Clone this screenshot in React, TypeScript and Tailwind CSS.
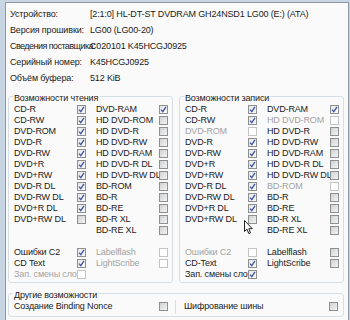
import React from "react";

type Item = { label: string; checked?: boolean; disabled?: boolean };

const readCol1: Item[] = [
  { label: "CD-R", checked: true },
  { label: "CD-RW", checked: true },
  { label: "DVD-ROM", checked: true },
  { label: "DVD-R", checked: true },
  { label: "DVD-RW", checked: true },
  { label: "DVD+R", checked: true },
  { label: "DVD+RW", checked: true },
  { label: "DVD-R DL", checked: true },
  { label: "DVD-RW DL", checked: true },
  { label: "DVD+R DL", checked: true },
  { label: "DVD+RW DL" },
];

const readCol2: Item[] = [
  { label: "DVD-RAM", checked: true },
  { label: "HD DVD-ROM" },
  { label: "HD DVD-R" },
  { label: "HD DVD-RW" },
  { label: "HD DVD-RAM" },
  { label: "HD DVD-R DL" },
  { label: "HD DVD-RW DL" },
  { label: "BD-ROM" },
  { label: "BD-R" },
  { label: "BD-RE" },
  { label: "BD-R XL" },
  { label: "BD-RE XL" },
];

const readExtra1: Item[] = [
  { label: "Ошибки C2", checked: true },
  { label: "CD Text", checked: true },
  { label: "Зап. смены слоя", disabled: true },
];
const readExtra2: Item[] = [
  { label: "Labelflash", disabled: true },
  { label: "LightScribe", disabled: true },
];

const writeCol1: Item[] = [
  { label: "CD-R", checked: true },
  { label: "CD-RW", checked: true },
  { label: "DVD-ROM", disabled: true },
  { label: "DVD-R", checked: true },
  { label: "DVD-RW", checked: true },
  { label: "DVD+R", checked: true },
  { label: "DVD+RW", checked: true },
  { label: "DVD-R DL", checked: true },
  { label: "DVD-RW DL", checked: true },
  { label: "DVD+R DL", checked: true },
  { label: "DVD+RW DL" },
];

const writeCol2: Item[] = [
  { label: "DVD-RAM", checked: true },
  { label: "HD DVD-ROM", disabled: true },
  { label: "HD DVD-R" },
  { label: "HD DVD-RW" },
  { label: "HD DVD-RAM" },
  { label: "HD DVD-R DL" },
  { label: "HD DVD-RW DL" },
  { label: "BD-ROM", disabled: true },
  { label: "BD-R" },
  { label: "BD-RE" },
  { label: "BD-R XL" },
  { label: "BD-RE XL" },
];

const writeExtra1: Item[] = [
  { label: "Ошибки C2", disabled: true },
  { label: "CD-Text", checked: true },
  { label: "Зап. смены слоя", checked: true },
];
const writeExtra2: Item[] = [{ label: "Labelflash" }, { label: "LightScribe" }];

// label, value, squeeze long label so it fits the column
const info: [string, string, boolean][] = [
  ["Устройство:", "[2:1:0] HL-DT-ST DVDRAM GH24NSD1 LG00 (E:) (ATA)", false],
  ["Версия прошивки:", "LG00 (LG00-20)", false],
  ["Сведения поставщика:", "C020101 K45HCGJ0925", true],
  ["Серийный номер:", "K45HCGJ0925", false],
  ["Объём буфера:", "512 KiB", false],
];

function Check({ checked, disabled }: { checked?: boolean; disabled?: boolean }) {
  if (disabled) {
    return <div className="w-[9px] h-[9px] shrink-0 border border-[#c4c4c4] bg-white" />;
  }
  return (
    <div
      className={
        "w-[9px] h-[9px] shrink-0 border border-[#8e8f8f] bg-gradient-to-br flex items-center justify-center " +
        (checked ? "from-[#e4e6ea] to-[#fbfbfb]" : "from-[#cfd1d4] to-[#f4f4f4]")
      }
    >
      {checked && (
        <svg width="7" height="7" viewBox="0 0 7 7">
          <path d="M1 3.6 L2.8 5.6 L6 0.8" fill="none" stroke="#3c55a0" strokeWidth="1.3" />
        </svg>
      )}
    </div>
  );
}

function Cell({ item }: { item?: Item }) {
  if (!item) return <div className="w-[72px] shrink-0" />;
  return (
    <div className="flex items-center shrink-0">
      <span
        className={
          "w-[63px] whitespace-nowrap overflow-visible " + (item.disabled ? "text-[#a3a3a3]" : "text-[#1b1b1b]")
        }
      >
        {item.label}
      </span>
      <Check checked={item.checked} disabled={item.disabled} />
    </div>
  );
}

function Rows({ col1, col2 }: { col1: Item[]; col2: Item[] }) {
  const n = Math.max(col1.length, col2.length);
  return (
    <div className="flex flex-col">
      {Array.from({ length: n }).map((_, i) => (
        <div key={i} className="flex items-center h-[11px]">
          <Cell item={col1[i]} />
          <div className="w-[10px] shrink-0" />
          <Cell item={col2[i]} />
        </div>
      ))}
    </div>
  );
}

function Group({
  title,
  col1,
  col2,
  extra1,
  extra2,
}: {
  title: string;
  col1: Item[];
  col2: Item[];
  extra1: Item[];
  extra2: Item[];
}) {
  return (
    <fieldset className="w-[165px] border border-[#d5dfe5] rounded-[3px] pl-[5px] pt-[1px] pb-[2px]">
      <legend className="ml-[-1px] px-[1px] pt-[3px] leading-[10px] text-[#1b1b1b]">{title}</legend>
      <Rows col1={col1} col2={col2} />
      <div className="mt-[11px]">
        <Rows col1={extra1} col2={extra2} />
      </div>
    </fieldset>
  );
}

export default function App() {
  return (
    <div className="w-[350px] h-[320px] overflow-hidden bg-[#c8d5e2] pt-[2px] font-['Liberation_Sans',Arial,sans-serif] text-[9px] tracking-[-0.15px] leading-[11px]">
      <div className="ml-[5px] w-[344px] h-[330px] border border-[#8d97a3] bg-[#fafafa] relative">
        <div className="pl-[4px] pt-[3px] flex flex-col">
          {info.map(([k, v, tight]) => (
            <div key={k} className="flex items-center h-[16px] text-[#1b1b1b]">
              <span className={"w-[80px] shrink-0 whitespace-nowrap " + (tight ? "tracking-[-0.55px]" : "")}>{k}</span>
              <span className="whitespace-nowrap">{v}</span>
            </div>
          ))}
        </div>

        <div className="flex gap-[6px] ml-[2px] mt-[4px]">
          <Group title="Возможности чтения" col1={readCol1} col2={readCol2} extra1={readExtra1} extra2={readExtra2} />
          <Group title="Возможности записи" col1={writeCol1} col2={writeCol2} extra1={writeExtra1} extra2={writeExtra2} />
        </div>

        <fieldset className="ml-[2px] mt-[4px] w-[336px] border border-[#d5dfe5] rounded-[3px] pl-[5px] pt-[1px] pb-[4px]">
          <legend className="ml-[-1px] px-[1px] pt-[3px] leading-[10px] text-[#1b1b1b]">Другие возможности</legend>
          <div className="flex items-center h-[11px] text-[#1b1b1b]">
            <span className="w-[145px] shrink-0 whitespace-nowrap">Создание Binding Nonce</span>
            <Check />
            <div className="w-[7px] shrink-0" />
            <div className="w-px h-[14px] bg-[#d5dfe5] shrink-0" />
            <div className="w-[8px] shrink-0" />
            <span className="w-[145px] shrink-0 whitespace-nowrap">Шифрование шины</span>
            <Check />
          </div>
        </fieldset>

        <svg className="absolute left-[238px] top-[217px]" width="10" height="15" viewBox="0 0 10 15">
          <path d="M0.5 0.5 L0.5 11.5 L3 9.2 L4.8 13.5 L6.5 12.8 L4.8 8.7 L8.3 8.7 Z" fill="white" stroke="#222" strokeWidth="1" strokeLinejoin="round" />
        </svg>
      </div>
    </div>
  );
}
